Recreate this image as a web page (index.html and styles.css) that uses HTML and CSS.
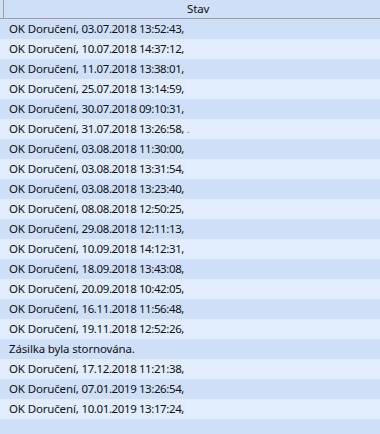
FILE: index.html
```html
<!DOCTYPE html>
<html lang="cs">
<head>
<meta charset="utf-8">
<title>Stav</title>
<link rel="stylesheet" href="styles.css">
</head>
<body>
<div class="grid">
  <div class="topband"></div>
  <div class="line-white"></div>
  <div class="line-gap"></div>
  <div class="line-blue"></div>
  <div class="header">
    <div class="hcell-stub"></div>
    <div class="hcell">Stav</div>
  </div>
  <div class="rows">
    <div class="row">OK Doručení, <span class="ts">03.07.2018 13:52:43,</span></div>
    <div class="row">OK Doručení, <span class="ts">10.07.2018 14:37:12,</span></div>
    <div class="row">OK Doručení, <span class="ts">11.07.2018 13:38:01,</span></div>
    <div class="row">OK Doručení, <span class="ts">25.07.2018 13:14:59,</span></div>
    <div class="row">OK Doručení, <span class="ts">30.07.2018 09:10:31,</span></div>
    <div class="row">OK Doručení, <span class="ts">31.07.2018 13:26:58,</span><span class="mark">.</span></div>
    <div class="row">OK Doručení, <span class="ts">03.08.2018 11:30:00,</span></div>
    <div class="row">OK Doručení, <span class="ts">03.08.2018 13:31:54,</span></div>
    <div class="row">OK Doručení, <span class="ts">03.08.2018 13:23:40,</span></div>
    <div class="row">OK Doručení, <span class="ts">08.08.2018 12:50:25,</span></div>
    <div class="row">OK Doručení, <span class="ts">29.08.2018 12:11:13,</span></div>
    <div class="row">OK Doručení, <span class="ts">10.09.2018 14:12:31,</span></div>
    <div class="row">OK Doručení, <span class="ts">18.09.2018 13:43:08,</span></div>
    <div class="row">OK Doručení, <span class="ts">20.09.2018 10:42:05,</span></div>
    <div class="row">OK Doručení, <span class="ts">16.11.2018 11:56:48,</span></div>
    <div class="row">OK Doručení, <span class="ts">19.11.2018 12:52:26,</span></div>
    <div class="row">Zásilka byla stornována.</div>
    <div class="row">OK Doručení, <span class="ts">17.12.2018 11:21:38,</span></div>
    <div class="row">OK Doručení, <span class="ts">07.01.2019 13:26:54,</span></div>
    <div class="row">OK Doručení, <span class="ts">10.01.2019 13:17:24,</span></div>
    <div class="row"></div>
  </div>
</div>
</body>
</html>
```
FILE: styles.css
```css
html, body {
  margin: 0;
  padding: 0;
  background: #cfdff7;
  overflow: hidden;
}
.grid {
  display: flex;
  flex-direction: column;
  width: 380px;
  height: 434px;
  overflow: hidden;
  font-family: "Noto Sans", "Open Sans", sans-serif;
  font-size: 11.5px;
  letter-spacing: -0.15px;
  color: #111;
}
.topband {
  height: 9px;
  background: #cfdff7;
}
.line-white {
  height: 1px;
  background: #ffffff;
}
.line-gap {
  height: 1px;
  background: #cfdff7;
}
.line-blue {
  height: 1px;
  background: #6f91cc;
}
.header {
  display: flex;
  height: 18px;
  background: #cfdff7;
  border-bottom: 1px solid #a0a0a0;
}
.hcell-stub {
  width: 3px;
  border-right: 1px solid #a0a0a0;
}
.hcell {
  flex: 1;
  padding-left: 183px;
  line-height: 18px;
}
.rows {
  display: flex;
  flex-direction: column;
}
.row {
  flex: 0 0 20px;
  height: 20px;
  line-height: 20px;
  padding-left: 9px;
  white-space: nowrap;
  background: #cfdff7;
}
.row:nth-child(even) {
  background: #e1ecfc;
}
.ts {
  letter-spacing: -0.4px;
}
.mark {
  color: #555;
  margin-left: 3px;
  font-size: 9px;
}
```
